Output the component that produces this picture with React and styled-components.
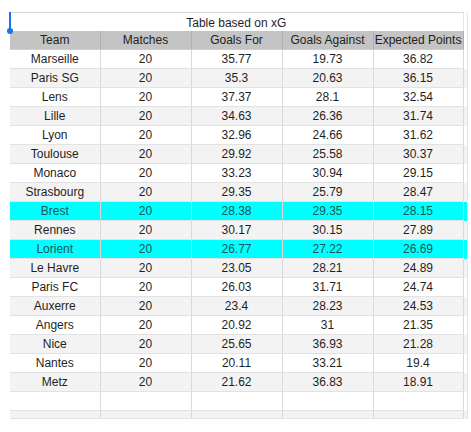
import React from 'react'
import styled, { createGlobalStyle } from 'styled-components'

const rows = [
  ['Marseille', 20, '35.77', '19.73', '36.82'],
  ['Paris SG', 20, '35.3', '20.63', '36.15'],
  ['Lens', 20, '37.37', '28.1', '32.54'],
  ['Lille', 20, '34.63', '26.36', '31.74'],
  ['Lyon', 20, '32.96', '24.66', '31.62'],
  ['Toulouse', 20, '29.92', '25.58', '30.37'],
  ['Monaco', 20, '33.23', '30.94', '29.15'],
  ['Strasbourg', 20, '29.35', '25.79', '28.47'],
  ['Brest', 20, '28.38', '29.35', '28.15', true],
  ['Rennes', 20, '30.17', '30.15', '27.89'],
  ['Lorient', 20, '26.77', '27.22', '26.69', true],
  ['Le Havre', 20, '23.05', '28.21', '24.89'],
  ['Paris FC', 20, '26.03', '31.71', '24.74'],
  ['Auxerre', 20, '23.4', '28.23', '24.53'],
  ['Angers', 20, '20.92', '31', '21.35'],
  ['Nice', 20, '25.65', '36.93', '21.28'],
  ['Nantes', 20, '20.11', '33.21', '19.4'],
  ['Metz', 20, '21.62', '36.83', '18.91'],
]

const headers = ['Team', 'Matches', 'Goals For', 'Goals Against', 'Expected Points']

const App = () => (
  <>
    <GlobalStyle />
    <Sheet>
      <Handle />
      <Grid>
        <colgroup>
          <col style={{ width: 90 }} />
          <col style={{ width: 91 }} />
          <col style={{ width: 91 }} />
          <col style={{ width: 91 }} />
          <col style={{ width: 90 }} />
          <col style={{ width: 4 }} />
        </colgroup>
        <tbody>
          <tr>
            <Title colSpan={5}>Table based on xG</Title>
            <Edge />
          </tr>
          <tr>
            {headers.map(h => (
              <Head key={h}>{h}</Head>
            ))}
            <Edge />
          </tr>
          {rows.map((r, i) => (
            <Row key={r[0]} $striped={i % 2 === 1} $hl={r[5]}>
              {r.slice(0, 5).map((c, j) => (
                <Cell key={j}>{c}</Cell>
              ))}
              <Edge />
            </Row>
          ))}
          <Row $striped={false}>
            {[0, 1, 2, 3, 4].map(j => (
              <Cell key={j} />
            ))}
            <Edge />
          </Row>
          <Row $striped $short>
            {[0, 1, 2, 3, 4].map(j => (
              <Cell key={j} />
            ))}
            <Edge />
          </Row>
        </tbody>
      </Grid>
    </Sheet>
  </>
)

export default App

const GlobalStyle = createGlobalStyle`
  html, body {
    margin: 0;
    background: #ffffff;
  }
  body {
    font-family: 'Liberation Sans', Arial, sans-serif;
  }
`

const Sheet = styled.div`
  position: relative;
  padding: 12px 0 0 10px;
`

const Handle = styled.div`
  position: absolute;
  left: 9px;
  top: 12px;
  width: 2px;
  height: 19px;
  background: #1a73e8;
  &::after {
    content: '';
    position: absolute;
    left: -2px;
    bottom: -3px;
    width: 6px;
    height: 6px;
    border-radius: 50%;
    background: #1a73e8;
  }
`

const Grid = styled.table`
  border-collapse: collapse;
  table-layout: fixed;
  width: 457px;
  font-size: 12px;
  color: #1f1f1f;
`

const Title = styled.td`
  height: 18px;
  padding: 0;
  text-align: center;
  border-top: 1px solid #d9d9d9;
  vertical-align: bottom;
  line-height: 16px;
`

const Head = styled.td`
  height: 18px;
  padding: 0;
  text-align: center;
  background: #c4c4c4;
  border-right: 1px solid #b0b0b0;
  border-bottom: 1px solid #cfcfcf;
  color: #222;
  white-space: nowrap;
`

const Edge = styled.td`
  padding: 0;
  border-left: 1px solid #e6e6e6;
  border-right: 1px solid #e6e6e6;
`

const Row = styled.tr`
  height: ${p => (p.$short ? 8 : 19)}px;
  background: ${p => (p.$hl ? '#00ffff' : p.$striped ? '#f3f3f3' : '#ffffff')};
  color: ${p => (p.$hl ? '#185656' : '#1f1f1f')};
`

const Cell = styled.td`
  padding: 0;
  text-align: center;
  border-right: 1px solid #d9d9d9;
  border-bottom: 1px solid #e2e2e2;
  white-space: nowrap;
`
